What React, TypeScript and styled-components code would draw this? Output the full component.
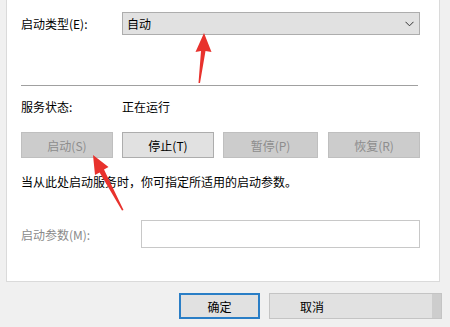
import React from "react";
import styled, { createGlobalStyle } from "styled-components";

const GlobalStyle = createGlobalStyle`
  html, body {
    margin: 0;
    padding: 0;
    background: #f0f0f0;
  }
  body {
    font-family: "Noto Sans CJK SC", "Liberation Sans", sans-serif;
    font-size: 12px;
    color: #000;
  }
`;

const actions = [
  { label: "启动(S)", disabled: true },
  { label: "停止(T)", disabled: false },
  { label: "暂停(P)", disabled: true },
  { label: "恢复(R)", disabled: true },
];

const App = () => {
  return (
    <Page>
      <GlobalStyle />
      <Panel>
        <FieldRow>
          <Label>启动类型(E):</Label>
          <Combo>
            <span>自动</span>
            <svg width="9" height="6" viewBox="0 0 9 6">
              <polyline points="0.5,0.8 4.5,4.8 8.5,0.8" fill="none" stroke="#333" strokeWidth="1" />
            </svg>
          </Combo>
        </FieldRow>
        <Separator />
        <FieldRow>
          <Label>服务状态:</Label>
          <span>正在运行</span>
        </FieldRow>
        <ActionRow>
          {actions.map((a) => (
            <ActionButton key={a.label} disabled={a.disabled}>
              {a.label}
            </ActionButton>
          ))}
        </ActionRow>
        <Hint>当从此处启动服务时，你可指定所适用的启动参数。</Hint>
        <ParamRow>
          <Label $muted>启动参数(M):</Label>
          <ParamInput />
        </ParamRow>
      </Panel>
      <Footer>
        <OkButton>确定</OkButton>
        <CancelButton>取消</CancelButton>
      </Footer>
      <Arrows width="450" height="327" viewBox="0 0 450 327">
        <polygon points="204,33 211.5,52 205.5,51 200,83 198.5,83 201,51 195.5,52" fill="#e8322d" />
        <polygon points="93,155 108.5,167 104,169.6 123.5,210 122,210.5 99.6,172.4 95,175" fill="#e8322d" />
      </Arrows>
    </Page>
  );
};

export default App;

const Page = styled.div`
  position: relative;
  width: 450px;
  height: 327px;
  overflow: hidden;
  background: #f0f0f0;
`;

const Panel = styled.div`
  margin-left: 6px;
  width: 434px;
  height: 282px;
  background: #fff;
  border: 1px solid #dadada;
  border-top: none;
  padding: 12px 0 0 14px;
  box-sizing: border-box;
  display: flex;
  flex-direction: column;
`;

const FieldRow = styled.div`
  display: flex;
  align-items: center;
  height: 23px;
`;

const Label = styled.span<{ $muted?: boolean }>`
  width: 101px;
  flex-shrink: 0;
  color: ${(p) => (p.$muted ? "#8a8a8a" : "#000")};
`;

const Combo = styled.div`
  width: 298px;
  height: 23px;
  box-sizing: border-box;
  border: 1px solid #adadad;
  background: #e1e1e1;
  display: flex;
  align-items: center;
  justify-content: space-between;
  padding: 0 5px 0 4px;
`;

const Separator = styled.div`
  width: 397px;
  height: 1px;
  background: #a0a0a0;
  margin: 50px 0 9px;
`;

const ActionRow = styled.div`
  display: flex;
  gap: 9px;
  margin-top: 14px;
`;

const ActionButton = styled.button`
  width: 92px;
  height: 26px;
  box-sizing: border-box;
  padding: 0;
  font: inherit;
  border: 1px solid ${(p) => (p.disabled ? "#bfbfbf" : "#adadad")};
  background: ${(p) => (p.disabled ? "#cccccc" : "#e1e1e1")};
  color: ${(p) => (p.disabled ? "#8d8d8d" : "#000")};

  &:nth-child(3) {
    width: 95px;
  }
  &:nth-child(4) {
    margin-left: 1px;
  }
`;

const Hint = styled.div`
  margin-top: 15px;
  line-height: 18px;
`;

const ParamRow = styled.div`
  display: flex;
  align-items: center;
  margin-top: 29px;
`;

const ParamInput = styled.div`
  margin-left: 19px;
  width: 279px;
  height: 28px;
  box-sizing: border-box;
  border: 1px solid #c8c8c8;
  background: #fff;
`;

const Footer = styled.div`
  display: flex;
  gap: 9px;
  padding: 11px 0 0 179px;
`;

const OkButton = styled.button`
  width: 81px;
  height: 26px;
  box-sizing: border-box;
  padding: 0;
  font: inherit;
  border: 2px solid #2a7ec6;
  background: #e1e1e1;
  color: #000;
`;

const CancelButton = styled.button`
  width: 173px;
  height: 26px;
  box-sizing: border-box;
  padding: 0 0 0 30px;
  font: inherit;
  text-align: left;
  border: 1px solid #c4c4c4;
  background: #e1e1e1;
  box-shadow: inset -9px 0 0 #cdcdcd;
  color: #000;
`;

const Arrows = styled.svg`
  position: absolute;
  left: 0;
  top: 0;
  pointer-events: none;
`;
